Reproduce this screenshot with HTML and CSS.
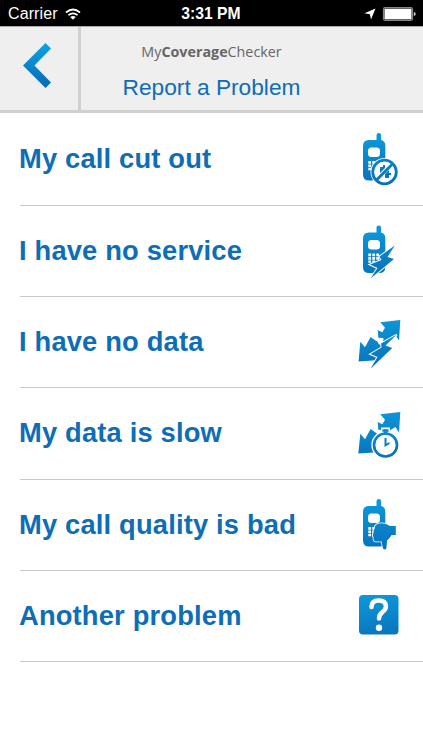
FILE: index.html
```html
<!DOCTYPE html>
<html lang="en">
<head>
  <meta charset="UTF-8">
  <title>Report a Problem</title>
  <link rel="stylesheet" href="styles.css">
</head>
<body>
  <!-- shared icon parts -->
  <svg class="defs" width="0" height="0">
    <defs>
      <linearGradient id="blue" gradientUnits="userSpaceOnUse" x1="24" y1="7" x2="32" y2="57">
        <stop offset="0" stop-color="#0d9bdb"/>
        <stop offset="1" stop-color="#0870b9"/>
      </linearGradient>
      <symbol id="phone" viewBox="0 0 60 65">
        <path fill="url(#blue)" fill-rule="evenodd" d="M26.500 14V9.300q0-2.300 2.300-2.300t2.300 2.300V14q4.200 1.200 4.200 5.500v29q0 6-6 6H19q-6 0-6-6V20q0-6 6-6zM21.500 21.500q-3.500 0-3.500 3.500v2.500q0 3.500 3.500 3.500h5q3.500 0 3.500-3.500V25q0-3.500-3.500-3.500z"/>
        <path fill="#fff" d="M18.300 35h2.800v2.800h-2.800zM22.300 35h2.800v2.800h-2.800zM26.300 35h2.800v2.800h-2.800zM18.300 38.600h2.800v2.600h-2.800zM22.300 38.600h2.800v2.600h-2.800zM26.300 38.600h2.800v2.600h-2.800zM18.300 42h2.800v2.200h-2.800zM22.300 42h2.800v2.200h-2.800z"/>
      </symbol>
      <symbol id="arrow-up" viewBox="0 0 60 65">
        <path fill="url(#blue)" d="M50.300 10 30.300 12.300 35 17.700 32.300 22.300 27.700 20 28.300 27.800 33.500 28 33 32.500 45.500 25 49 30.500z"/>
      </symbol>
    </defs>
  </svg>

  <div class="status">
    <div class="carrier">
      <span>Carrier</span>
      <svg width="16" height="12" viewBox="0 0 16 12">
        <path d="M1 4.500Q8-1.500 15 4.500M3.400 7.200q4.600-3.800 9.200 0" fill="none" stroke="#fff" stroke-width="1.700"/>
        <path d="M5.200 9q2.800-2.100 5.600 0L8 11.800z" fill="#fff"/>
      </svg>
    </div>
    <div class="time">3:31 PM</div>
    <div class="indicators">
      <svg width="12" height="12" viewBox="0 0 12 12"><path d="M11.500.5 7 11.500 5.900 6.200.5 5.300z" fill="#fff"/></svg>
      <svg width="34" height="14" viewBox="0 0 34 14">
        <rect x="1.500" y=".7" width="29" height="12.600" rx="1.500" fill="none" stroke="#888" stroke-width="1.200"/>
        <rect x="2.500" y="1.700" width="27" height="10.600" fill="#fff"/>
        <path d="M31.800 5q2 .3 2 2t-2 2z" fill="#ccc"/>
      </svg>
    </div>
  </div>

  <header>
    <div class="back">
      <svg width="28" height="46" viewBox="0 0 28 46">
        <defs>
          <linearGradient id="back-blue" x1="0" y1="0" x2="0" y2="1">
            <stop offset="0" stop-color="#0da3e2"/>
            <stop offset="1" stop-color="#0868b4"/>
          </linearGradient>
        </defs>
        <path d="M22.500 0 28 5.500 11.500 22.500 28 39.500 22.500 45 0 22.500z" fill="url(#back-blue)"/>
      </svg>
    </div>
    <div class="heading">
      <div class="brand">My<b>Coverage</b>Checker</div>
      <h1>Report a Problem</h1>
    </div>
  </header>

  <ul class="problems">
    <li>
      <span class="label">My call cut out</span>
      <svg class="icon" viewBox="0 1 60 65">
        <use href="#phone"/>
        <circle cx="34.500" cy="46" r="14" fill="#fff"/>
        <circle cx="34.500" cy="46" r="11.800" fill="#fff" stroke="url(#blue)" stroke-width="2.800"/>
        <path d="M30 41h3v-2h2v3l-5 5zM39 44v3h2v2h-2v3h-4v-4z" fill="url(#blue)"/>
        <path d="M26.500 54 42.500 38" stroke="url(#blue)" stroke-width="2.800"/>
      </svg>
    </li>
    <li>
      <span class="label">I have no service</span>
      <svg class="icon" viewBox="0 .5 60 65">
        <use href="#phone"/>
        <path d="M44.800 27 29.500 38 31.500 41.500 20 46 27.500 49.500 20.800 59.800 44 40.500 37.500 38.500z" fill="url(#blue)" stroke="#fff" stroke-width="2" paint-order="stroke"/>
      </svg>
    </li>
    <li>
      <span class="label">I have no data</span>
      <svg class="icon" viewBox="0 0 60 65">
        <use href="#arrow-up"/>
        <path d="M10.300 31.700 8.600 51.600 26 50.200 34 34 29 34.500 27.500 31.500 25.500 30.500 20.600 27 15 37.300z" fill="url(#blue)"/>
        <path d="M46.800 24.500 31 33.500 31.500 37.500 20.500 44 27.500 47 20.500 58.800 42.300 38 35.500 35.500z" fill="url(#blue)" stroke="#fff" stroke-width="2" paint-order="stroke"/>
      </svg>
    </li>
    <li>
      <span class="label">My data is slow</span>
      <svg class="icon" viewBox="0 -1 60 65">
        <use href="#arrow-up"/>
        <path d="M10.300 31.700 8.300 51.600 31 50 29 33 25.500 30.500 20.600 27 15 37.300z" fill="url(#blue)"/>
        <circle cx="35.500" cy="43" r="14.200" fill="#fff"/>
        <path d="M31 25.500h9v5h-9z" fill="#fff"/>
        <circle cx="35.500" cy="43" r="11.500" fill="#fff" stroke="url(#blue)" stroke-width="2.700"/>
        <path d="M32.300 27.500q3.200-1 6.400 0v2.300h-1.600v2.500h-3.200v-2.500h-1.600z" fill="url(#blue)"/>
        <path d="M34.500 36h2v5.500l3-1.500v2l-5 3z" fill="url(#blue)"/>
      </svg>
    </li>
    <li>
      <span class="label">My call quality is bad</span>
      <svg class="icon" viewBox="0 0 60 65">
        <use href="#phone"/>
        <path d="M27 32.200q4-1.500 8.500-.4l4.500 2.200h5.800v9h-4.300q-2 4-4.500 5.500l-.5 7q-.5 3.500-3.500 1l-1.500-7h-6q-2.500-.5-2-4-1.500-2.500 0-4.500-.5-2.500 1-4 0-3.500 2.500-4.800z" fill="url(#blue)" stroke="#fff" stroke-width="1.500" paint-order="stroke"/>
      </svg>
    </li>
    <li>
      <span class="label">Another problem</span>
      <svg class="icon" viewBox="0 -1.500 60 65">
        <rect x="9" y="10.500" width="39.500" height="39.500" rx="4" fill="url(#blue)"/>
        <path d="M21.500 22.500q0-6.500 7.200-6.500t7.200 6q0 3-3.700 5.800-3.200 2.300-3.200 6.200" fill="none" stroke="#fff" stroke-width="4.500" stroke-linecap="round"/>
        <circle cx="29" cy="43.200" r="3.200" fill="#fff"/>
      </svg>
    </li>
  </ul>
</body>
</html>
```

FILE: styles.css
```css
body {
  font-family: "Liberation Sans", Arial, sans-serif;
  margin: 0;
  padding: 0;
  background: #fff;
}
svg {
  display: block;
}
.defs {
  position: absolute;
}

/* phone status bar */
.status {
  display: grid;
  grid-template-columns: 1fr auto 1fr;
  align-items: center;
  height: 26px;
  padding: 1px 7px 0 8px;
  box-sizing: border-box;
  background: #000;
  color: #fff;
  font-size: 16px;
}
.carrier {
  display: flex;
  align-items: center;
  gap: 7px;
  letter-spacing: 0.1px;
}
.time {
  margin-right: 2px;
  font-size: 15.7px;
  font-weight: bold;
}
.indicators {
  display: flex;
  justify-content: flex-end;
  align-items: center;
  gap: 6px;
}

header {
  display: flex;
  height: 87px;
  box-sizing: border-box;
  background: #efefef;
  border-top: 1px solid #aaa;
  border-bottom: 3px solid #d0d0d0;
}
.back {
  width: 78px;
  padding: 16px 0 0 23px;
  box-sizing: border-box;
}
.heading {
  flex: 1;
  padding-right: 81px;
  border-left: 3px solid #d0d0d0;
  text-align: center;
  color: #0d6db7;
}
.brand {
  margin-top: 15px;
  font-family: "Open Sans", sans-serif;
  font-size: 14.3px;
  line-height: 20px;
  color: #666;
}
h1 {
  margin: 11px 0 0;
  font-size: 22.7px;
  line-height: 28px;
  font-weight: normal;
}

/* list of problems */
.problems {
  list-style: none;
  margin: 0;
  padding: 0 0 0 20px;
}
.problems li {
  display: flex;
  justify-content: space-between;
  align-items: center;
  height: 91.2px;
  box-sizing: border-box;
  padding-right: 13px;
  border-bottom: 1px solid #c8c8c8;
}
.problems li:first-child {
  height: 93px;
}
.label {
  margin-left: -1px;
  color: #0d6db7;
  font-size: 27.3px;
  font-weight: bold;
  letter-spacing: 0.18px;
}
.icon {
  width: 60px;
  height: 65px;
}
```
